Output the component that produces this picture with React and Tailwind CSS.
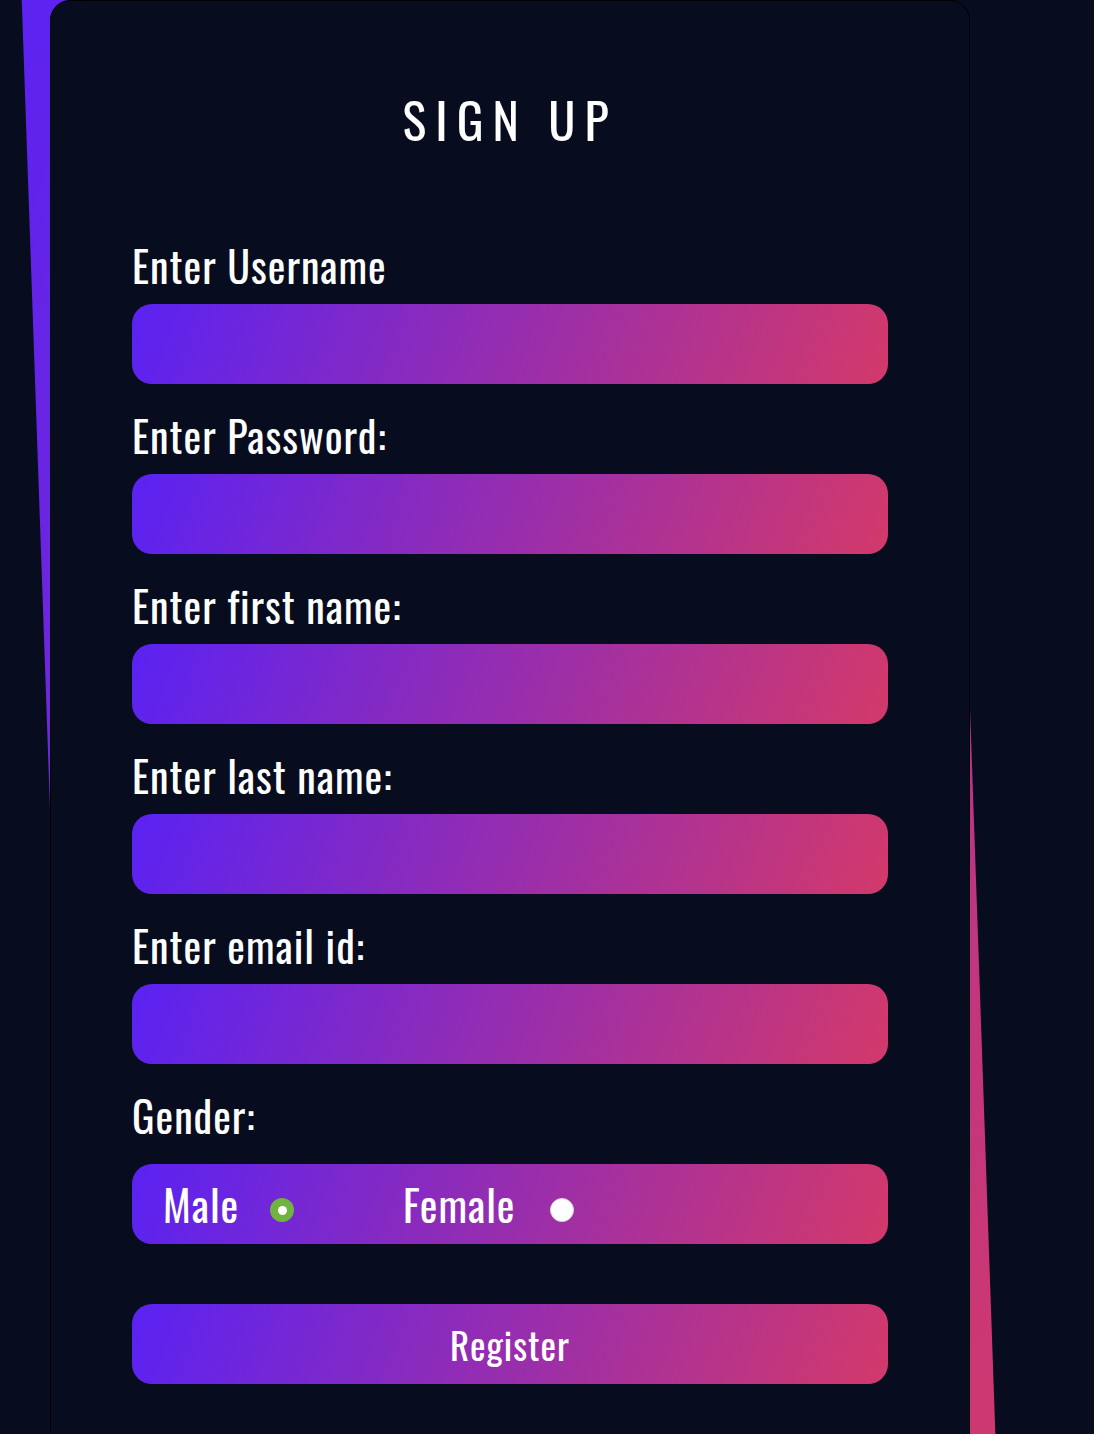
import React from "react";

const font = { fontFamily: 'Oswald, "Open Sans", "DejaVu Sans Condensed", sans-serif', fontStretch: "75%" };

const grad = "bg-[linear-gradient(110deg,#5a22f3,#d3396a)]";

function Field({ label, type = "text" }) {
  return (
    <div className="flex flex-col">
      <label className="text-[42px] leading-[52px] text-white mb-[13px] whitespace-nowrap tracking-[1px]">{label}</label>
      <input
        type={type}
        className={`h-[80px] w-full rounded-[20px] border-0 outline-none ${grad} px-6 text-white text-[28px]`}
      />
    </div>
  );
}

export default function App() {
  return (
    <div className="h-[1434px] w-full overflow-hidden bg-[#070c1f]" style={font}>
      <div className="pl-[50px]">
        <div className="relative w-[920px] h-[1546px]">
          <div className={`absolute left-[-1px] right-[-2px] top-[-60px] bottom-[-60px] rounded-[20px] -rotate-2 ${grad}`} />
          <div className="relative h-full rounded-[20px] border border-black bg-[#070c1f] px-[81px] pt-[89px]">
            <h1 className="text-center text-[50px] leading-[56px] text-white tracking-[9px] font-normal">SIGN UP</h1>
            <div className="mt-[93px] flex flex-col gap-[25px]">
              <Field label="Enter Username" />
              <Field label="Enter Password:" type="password" />
              <Field label="Enter first name:" />
              <Field label="Enter last name:" />
              <Field label="Enter email id:" type="email" />
              <div className="flex flex-col">
                <div className="text-[42px] leading-[52px] text-white mb-[23px] tracking-[1px]">Gender:</div>
                <div className={`h-[80px] rounded-[20px] ${grad} flex items-center pl-[31px]`}>
                  <div className="w-[240px] flex items-center">
                    <span className="w-[107px] text-[42px] leading-[42px] text-white tracking-[1px]">Male</span>
                    <span className="mt-[12px] w-[24px] h-[24px] rounded-full bg-[#6fb43f] flex items-center justify-center">
                      <span className="w-[9px] h-[9px] rounded-full bg-white" />
                    </span>
                  </div>
                  <div className="flex items-center">
                    <span className="w-[147px] text-[42px] leading-[42px] text-white tracking-[1px]">Female</span>
                    <span className="mt-[12px] w-[24px] h-[24px] rounded-full bg-white border border-[#d8d8d8]" />
                  </div>
                </div>
              </div>
              <button className={`mt-[35px] h-[80px] w-full rounded-[20px] ${grad} text-white text-[37px] leading-[37px] tracking-[1px]`}>
                Register
              </button>
            </div>
          </div>
        </div>
      </div>
    </div>
  );
}
